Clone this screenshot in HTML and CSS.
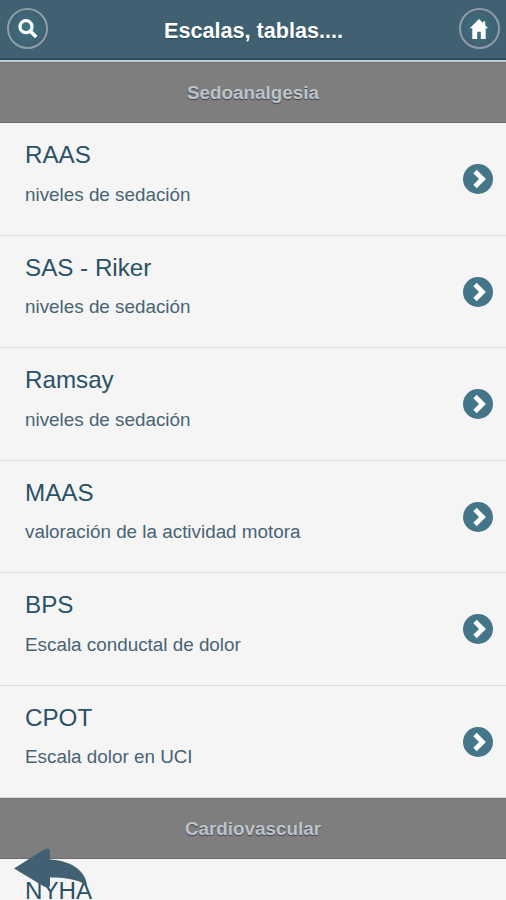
FILE: index.html
```html
<!DOCTYPE html>
<html lang="es">
<head>
  <meta charset="UTF-8">
  <title>Escalas, tablas....</title>
  <link rel="stylesheet" href="styles.css">
</head>
<body>
  <div class="page">
    <header class="header">
      <button class="round-btn" aria-label="Buscar">
        <svg width="22" height="22" viewBox="0 0 22 22">
          <circle cx="9" cy="8.7" r="6" fill="none" stroke="#fff" stroke-width="3.2"/>
          <path d="M13 12.700l6.200 6.200" stroke="#fff" stroke-width="3.5"/>
        </svg>
      </button>
      <h1>Escalas, tablas....</h1>
      <button class="round-btn" aria-label="Inicio">
        <svg width="20" height="22" viewBox="0 0 20 22">
          <path d="M10 1L.8 10.200h2.500V21h4.900v-7.200h3.600V21h4.900V10.200h2.500L16.200 7.200V3.500h-2.200v1.500z" fill="#fff"/>
        </svg>
      </button>
    </header>

    <div class="divider">Sedoanalgesia</div>
    <ul class="list">
      <li class="item">
        <div><h2>RAAS</h2><p>niveles de sedación</p></div>
        <svg class="arrow" viewBox="0 0 30 30"><circle cx="15" cy="15" r="15"/><path d="M12 7.500l7.500 7.500-7.500 7.500"/></svg>
      </li>
      <li class="item">
        <div><h2>SAS - Riker</h2><p>niveles de sedación</p></div>
        <svg class="arrow" viewBox="0 0 30 30"><circle cx="15" cy="15" r="15"/><path d="M12 7.500l7.500 7.500-7.500 7.500"/></svg>
      </li>
      <li class="item">
        <div><h2>Ramsay</h2><p>niveles de sedación</p></div>
        <svg class="arrow" viewBox="0 0 30 30"><circle cx="15" cy="15" r="15"/><path d="M12 7.500l7.500 7.500-7.500 7.500"/></svg>
      </li>
      <li class="item">
        <div><h2>MAAS</h2><p>valoración de la actividad motora</p></div>
        <svg class="arrow" viewBox="0 0 30 30"><circle cx="15" cy="15" r="15"/><path d="M12 7.500l7.500 7.500-7.500 7.500"/></svg>
      </li>
      <li class="item">
        <div><h2>BPS</h2><p>Escala conductal de dolor</p></div>
        <svg class="arrow" viewBox="0 0 30 30"><circle cx="15" cy="15" r="15"/><path d="M12 7.500l7.500 7.500-7.500 7.500"/></svg>
      </li>
      <li class="item">
        <div><h2>CPOT</h2><p>Escala dolor en UCI</p></div>
        <svg class="arrow" viewBox="0 0 30 30"><circle cx="15" cy="15" r="15"/><path d="M12 7.500l7.500 7.500-7.500 7.500"/></svg>
      </li>
    </ul>

    <div class="divider">Cardiovascular</div>
    <ul class="list">
      <li class="item">
        <div><h2>NYHA</h2></div>
      </li>
    </ul>

    <!-- Botón flotante para volver -->
    <svg class="back" width="76" height="52" viewBox="0 0 76 52">
      <path d="M0 20.500L30 1.500Q36-.5 36 3V11.500C55 12.500 71 21 73 37C62 31 50 29.500 36 29.500V38Q34 41 30 38.500Z" fill="#416072"/>
    </svg>
  </div>
</body>
</html>
```

FILE: styles.css
```css
* {
  box-sizing: border-box;
}
body {
  margin: 0;
  background-color: #f5f5f5;
  color: #2b5165;
  font-family: "Liberation Sans", Arial, sans-serif;
}
.page {
  position: relative;
  height: 900px;
  overflow: hidden;
}
.header {
  display: flex;
  align-items: flex-start;
  justify-content: space-between;
  height: 62px;
  padding: 8px 6px 0 7px;
  background-color: #416072;
  border-bottom: 2px solid #c3cfd3;
  box-shadow: inset 0 -2px #2c4f68;
}
.header h1 {
  margin: 10px 0 0;
  color: #fff;
  font-size: 21.6px;
  line-height: 26px;
  text-shadow: 0 1px 1px #24475a;
}
.round-btn {
  display: flex;
  align-items: center;
  justify-content: center;
  width: 41px;
  height: 41px;
  padding: 0;
  border: 2px solid #8d9eaa;
  border-radius: 50%;
  background: radial-gradient(#397781, #416072 68%);
}
.divider {
  height: 61px;
  background-color: #7e7e7e;
  border-top: 1px solid #707470;
  border-bottom: 1px solid #6d6d6d;
  color: #b9c5cb;
  font-size: 18.85px;
  font-weight: bold;
  line-height: 59px;
  text-align: center;
  text-shadow: 0 1px 1px #493d48;
}
.list {
  margin: 0;
  padding: 0;
  list-style: none;
}
.item {
  display: flex;
  align-items: flex-start;
  justify-content: space-between;
  height: 112.5px;
  padding: 18px 13px 0 25px;
  border-bottom: 1px solid #dcdcdc;
}
.item h2 {
  margin: 0;
  font-size: 24.2px;
  font-weight: normal;
  line-height: 28px;
}
.item p {
  margin: 14.8px 0 0;
  color: #486474;
  font-size: 18.85px;
  line-height: 22px;
}
.arrow {
  width: 30px;
  height: 30px;
  margin-top: 23px;
}
.arrow circle {
  fill: #447588;
}
.arrow path {
  fill: none;
  stroke: #fff;
  stroke-width: 4.8;
}
.back {
  position: absolute;
  left: 14px;
  top: 848px;
}
```
